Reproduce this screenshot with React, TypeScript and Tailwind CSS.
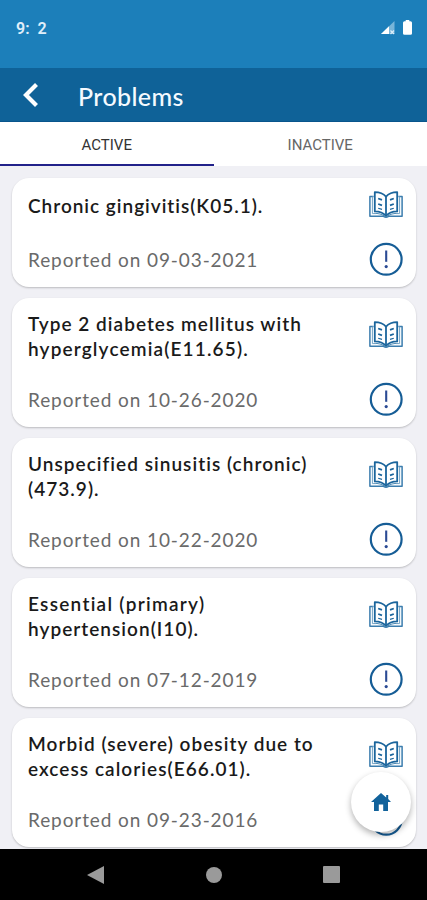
type Line = { text: string; tracking: string };
type Problem = { lines: Line[]; date: string };

const problems: Problem[] = [
  { lines: [{ text: 'Chronic gingivitis(K05.1).', tracking: 'tracking-[0.98px]' }], date: '09-03-2021' },
  {
    lines: [
      { text: 'Type 2 diabetes mellitus with', tracking: 'tracking-[1.03px]' },
      { text: 'hyperglycemia(E11.65).', tracking: 'tracking-[1.15px]' },
    ],
    date: '10-26-2020',
  },
  {
    lines: [
      { text: 'Unspecified sinusitis (chronic)', tracking: 'tracking-[1.03px]' },
      { text: '(473.9).', tracking: 'tracking-[1.03px]' },
    ],
    date: '10-22-2020',
  },
  {
    lines: [
      { text: 'Essential (primary)', tracking: 'tracking-[1.28px]' },
      { text: 'hypertension(I10).', tracking: 'tracking-[1.03px]' },
    ],
    date: '07-12-2019',
  },
  {
    lines: [
      { text: 'Morbid (severe) obesity due to', tracking: 'tracking-[1.03px]' },
      { text: 'excess calories(E66.01).', tracking: 'tracking-[1.05px]' },
    ],
    date: '09-23-2016',
  },
];

function BookIcon() {
  return (
    <svg width="34" height="28" viewBox="0 0 34 28" fill="none" stroke="#1b659c" strokeWidth="1.8" strokeLinejoin="round">
      <path d="M17 5.6C14.5 2.8 10 1.2 5.8 1.2V20.4C10 20.4 14.3 21.8 17 25C19.7 21.8 24 20.4 28.2 20.4V1.2C24 1.2 19.5 2.8 17 5.6Z" />
      <path d="M17 5.6V25" />
      <path d="M5 22.4C9 22.2 13 23 17 26C21 23 25 22.2 29 22.4" stroke="#4c8ab5" strokeWidth="1" />
      <path d="M4.6 5.4H.9V25.2H14.2C15.2 26.7 18.8 26.7 19.8 25.2H33.1V5.4H29.4" stroke="#3b7dae" strokeWidth="1.5" />
      <path d="M3.4 5.4V22.6H7M30.6 5.4V22.6H27" stroke="#75a5c6" strokeWidth="1" />
      <path d="M9.2 7.5L13 8.9M9.2 13L13 14.4M24.8 7.5L21 8.9M24.8 13L21 14.4" />
      <path d="M9.2 17.2L13 18.4M24.8 17.2L21 18.4" strokeWidth="1.2" />
    </svg>
  );
}

function AlertIcon() {
  return (
    <svg width="34" height="34" viewBox="0 0 34 34" fill="none">
      <circle cx="17.2" cy="17.3" r="15.4" stroke="#165d96" strokeWidth="2.2" />
      <path d="M17.2 8.5V19.8" stroke="#2a4a94" strokeWidth="2.1" />
      <circle cx="17.2" cy="24.6" r="1.6" fill="#2a4a94" />
    </svg>
  );
}

function ProblemCard({ problem }: { problem: Problem }) {
  const tall = problem.lines.length > 1;
  return (
    <article
      className={`flex justify-between rounded-[17px] bg-white pl-4 pr-[13px] shadow-[0_1px_2px_rgba(0,0,0,0.22)] ${tall ? 'h-[129px]' : 'h-[109px]'}`}
    >
      <div className={`flex flex-col justify-between pb-[15px] ${tall ? 'pt-[14px]' : 'pt-[16px]'}`}>
        <h2 className="text-[19px] font-semibold leading-[24.5px] text-[#1a1a1a]">
          {problem.lines.map((line) => (
            <span key={line.text} className={`block whitespace-nowrap ${line.tracking}`}>
              {line.text}
            </span>
          ))}
        </h2>
        <p className="whitespace-nowrap text-[19px] leading-6 tracking-[0.9px] text-[#6a6a6a]">Reported on {problem.date}</p>
      </div>
      <div className={`flex flex-col items-center justify-between pb-[11px] ${tall ? 'pt-[23px]' : 'pt-[13px]'}`}>
        <BookIcon />
        <AlertIcon />
      </div>
    </article>
  );
}

export default function App() {
  return (
    <div className="relative flex h-[900px] w-[427px] flex-col overflow-hidden bg-[#f0f0f5] font-[Lato,sans-serif]">
      <div className="flex h-[68px] shrink-0 justify-between bg-[#1c7fba] pl-4 pr-[15px] pt-[19px]">
        <span className="whitespace-pre font-[Roboto,sans-serif] text-[16px] font-semibold leading-[19px] text-[#e0effa]">9:  2</span>
        <div className="flex gap-[8px] pt-px">
          <svg width="14" height="15" viewBox="0 0 14 15">
            <path d="M0 14L13.5 1V14Z" fill="#78b5d9" />
            <path d="M0 14L8 6.3V14Z" fill="#fff" />
            <path d="M9.5 10.5L13 14M13 10.5L9.5 14" stroke="#dceefa" strokeWidth="1.2" />
          </svg>
          <svg width="9" height="15" viewBox="0 0 9 15" fill="#fff">
            <path d="M2.7 0H6.3V1.2H7.5Q9 1.2 9 2.7V13.5Q9 14.8 7.5 14.8H1.5Q0 14.8 0 13.5V2.7Q0 1.2 1.5 1.2H2.7Z" />
          </svg>
        </div>
      </div>
      <header className="flex h-[54px] shrink-0 items-center border-b border-[#09558c] bg-[#0f6298] pl-[23px]">
        <svg width="15" height="24" viewBox="0 0 15 24" fill="none" stroke="#fff" strokeWidth="4.2">
          <path d="M13.5 1.5L3 12L13.5 22.5" />
        </svg>
        <h1 className="ml-[40px] pt-[3px] text-[25px] font-medium leading-8 tracking-[0.4px] text-[#f5faff]">Problems</h1>
      </header>
      <nav className="flex h-[44px] shrink-0 bg-white font-[Roboto,sans-serif] text-[15px]">
        <button className="flex-1 border-b-2 border-[#22228a] pt-[4px] text-[#333]">ACTIVE</button>
        <button className="flex-1 border-b-2 border-transparent pt-[4px] text-[#666]">INACTIVE</button>
      </nav>
      <main className="flex flex-1 flex-col gap-[11px] overflow-hidden pl-[12px] pr-[11px] pt-[12px]">
        {problems.map((problem) => (
          <ProblemCard key={problem.date} problem={problem} />
        ))}
      </main>
      <button className="absolute bottom-[68px] right-4 flex size-[60px] items-center justify-center rounded-full bg-white shadow-[0_3px_6px_rgba(0,0,0,0.3)]">
        <svg width="20" height="18" viewBox="0 0 20 18" fill="#11629b">
          <path d="M10 0L15.2 4.4V2H17.2V6.1L20 9H17V18H12.2V11.5H7.8V18H3V9H0Z" />
        </svg>
      </button>
      <footer className="flex h-[51px] shrink-0 items-center justify-between bg-black pl-[87px] pr-[87px]">
        <svg width="17" height="18" viewBox="0 0 17 18" fill="#9a9a9a"><path d="M17 0V18L0 9Z" /></svg>
        <span className="size-4 rounded-full bg-[#9a9a9a]" />
        <span className="size-[17px] rounded-[1px] bg-[#9a9a9a]" />
      </footer>
    </div>
  );
}
